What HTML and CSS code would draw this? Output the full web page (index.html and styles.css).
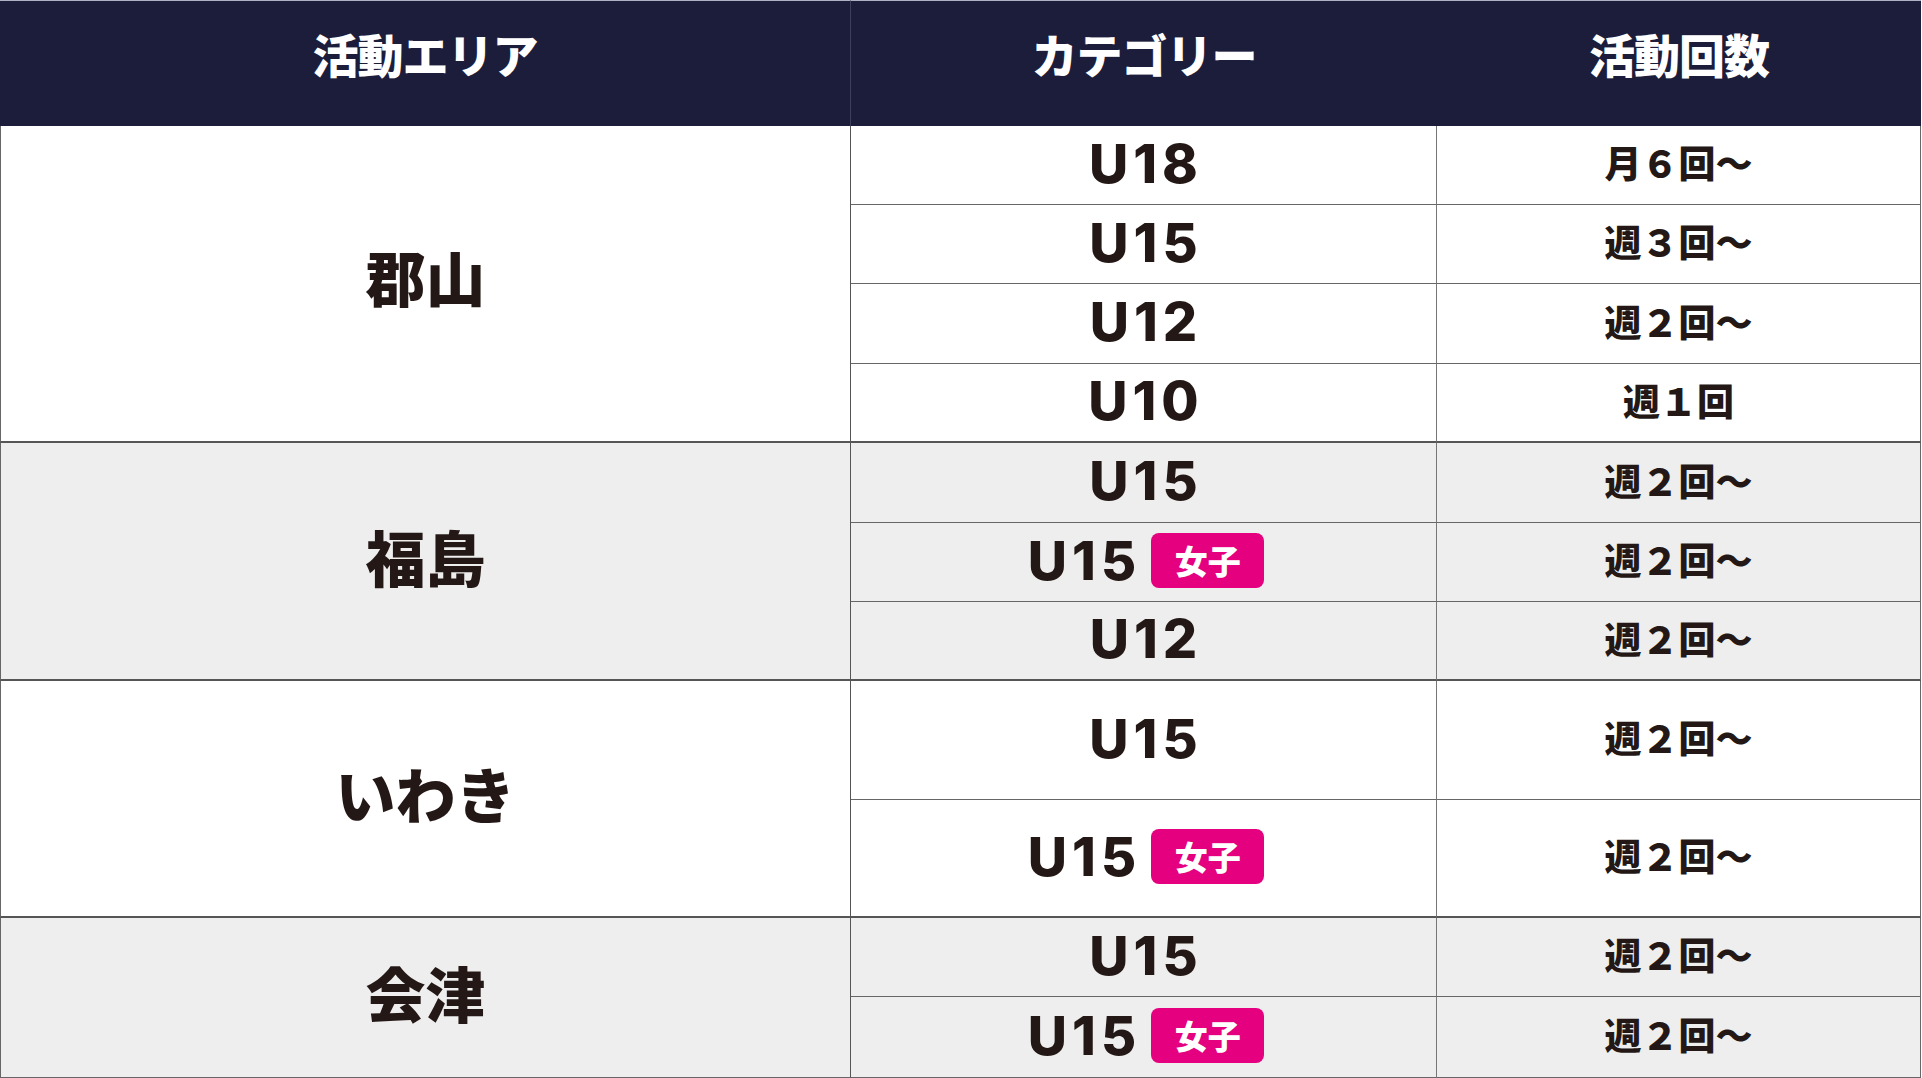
FILE: index.html
```html
<!DOCTYPE html>
<html lang="ja">
<head>
<meta charset="utf-8">
<title>活動エリア</title>
<link rel="stylesheet" href="styles.css">
</head>
<body>
<div class="schedule">
  <div class="head head-first">活動エリア</div>
  <div class="head head-mid">カテゴリー</div>
  <div class="head">活動回数</div>

  <div class="area area-koriyama">郡山</div>
  <div class="cat">U18</div><div class="freq">月６回〜</div>
  <div class="cat">U15</div><div class="freq">週３回〜</div>
  <div class="cat">U12</div><div class="freq">週２回〜</div>
  <div class="cat group-end">U10</div><div class="freq group-end">週１回</div>

  <div class="area area-fukushima shade">福島</div>
  <div class="cat shade">U15</div><div class="freq shade">週２回〜</div>
  <div class="cat shade">U15<span class="badge">女子</span></div><div class="freq shade">週２回〜</div>
  <div class="cat shade group-end">U12</div><div class="freq shade group-end">週２回〜</div>

  <div class="area area-iwaki">いわき</div>
  <div class="cat">U15</div><div class="freq">週２回〜</div>
  <div class="cat group-end">U15<span class="badge">女子</span></div><div class="freq group-end">週２回〜</div>

  <div class="area area-aizu shade">会津</div>
  <div class="cat shade">U15</div><div class="freq shade">週２回〜</div>
  <div class="cat shade last">U15<span class="badge">女子</span></div><div class="freq shade last">週２回〜</div>
</div>
</body>
</html>
```

FILE: styles.css
```css
html, body {
  margin: 0;
  padding: 0;
  background: #ffffff;
}

.schedule {
  display: grid;
  grid-template-columns: 851px 586px 484px;
  grid-template-rows: 126px 79px 79px 80px 79px 80px 79px 79px 119px 118px 79px 81px;
  width: 1921px;
  color: #231815;
  font-family: "Noto Sans CJK JP", "Noto Sans", sans-serif;
}

.schedule > div {
  box-sizing: border-box;
  display: flex;
  align-items: center;
  justify-content: center;
}

.head {
  background: #1b1d3b;
  color: #ffffff;
  font-weight: 900;
  font-size: 46px;
  padding-bottom: 22px;
  border-top: 1px solid #aeb2c4;
  letter-spacing: -1px;
}

.head-first {
  border-right: 1px solid #3c3f5c;
}

.area {
  grid-column: 1;
  font-weight: 900;
  font-size: 60px;
  border-left: 1px solid #666666;
  border-right: 1px solid #555555;
  border-bottom: 2px solid #555555;
  padding-bottom: 12px;
}

.area-koriyama { grid-row: 2 / 6; padding-bottom: 16px; }
.area-fukushima { grid-row: 6 / 9; }
.area-iwaki { grid-row: 9 / 11; }
.area-aizu { grid-row: 11 / 13; border-bottom: 1px solid #666666; }

.cat {
  grid-column: 2;
  font-family: "Inter", "Noto Sans", sans-serif;
  font-weight: 800;
  font-size: 54px;
  letter-spacing: 5px;
  padding-left: 5px;
  border-right: 1px solid #777777;
  border-bottom: 1px solid #666666;
  padding-bottom: 4px;
}

.freq {
  grid-column: 3;
  font-weight: 900;
  font-size: 37px;
  border-right: 1px solid #666666;
  border-bottom: 1px solid #666666;
  padding-bottom: 6px;
}

.group-end {
  border-bottom: 2px solid #555555;
}

.last {
  border-bottom: 1px solid #666666;
}

.shade {
  background: #eeeeee;
}

.badge {
  display: inline-flex;
  align-items: center;
  justify-content: center;
  width: 113px;
  height: 55px;
  margin-left: 10px;
  border-radius: 8px;
  background: #e4007f;
  color: #ffffff;
  font-family: "Noto Sans CJK JP", sans-serif;
  font-weight: 900;
  font-size: 33px;
  letter-spacing: 0;
}
```
